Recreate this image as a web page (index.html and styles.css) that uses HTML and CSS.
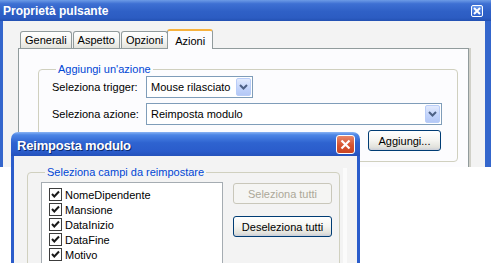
FILE: index.html
```html
<!DOCTYPE html>
<html lang="it">
<head>
    <meta charset="UTF-8" />
    <title>Proprietà pulsante</title>
    <link rel="stylesheet" href="styles.css">
</head>
<body>
    <!-- Finestra principale -->
    <div class="window main-window">
        <div class="titlebar">
            <span class="title">Proprietà pulsante</span>
            <span class="close-small">
                <svg width="8" height="8" viewBox="0 0 8 8"><path d="M1 1 L7 7 M7 1 L1 7" stroke="#fff" stroke-width="2"/></svg>
            </span>
        </div>
        <div class="window-body">
            <div class="tabs">
                <div class="tab">Generali</div>
                <div class="tab">Aspetto</div>
                <div class="tab">Opzioni</div>
                <div class="tab selected">Azioni</div>
            </div>
            <div class="tab-panel">
                <fieldset class="group action-group">
                    <legend>Aggiungi un'azione</legend>
                    <div class="form-row">
                        <label>Seleziona trigger:</label>
                        <div class="combo combo-short">
                            <span class="combo-text">Mouse rilasciato</span>
                            <span class="combo-btn"><svg width="9" height="6" viewBox="0 0 9 6"><path d="M1 1 L4.5 4.5 L8 1" fill="none" stroke="#4d6185" stroke-width="2"/></svg></span>
                        </div>
                    </div>
                    <div class="form-row">
                        <label>Seleziona azione:</label>
                        <div class="combo combo-long">
                            <span class="combo-text">Reimposta modulo</span>
                            <span class="combo-btn"><svg width="9" height="6" viewBox="0 0 9 6"><path d="M1 1 L4.5 4.5 L8 1" fill="none" stroke="#4d6185" stroke-width="2"/></svg></span>
                        </div>
                    </div>
                    <div class="form-row button-row">
                        <button class="xp-button add-button">Aggiungi...</button>
                    </div>
                </fieldset>
            </div>
        </div>
    </div>

    <!-- Finestra di dialogo sovrapposta -->
    <div class="window dialog">
        <div class="titlebar dialog-titlebar">
            <span class="title">Reimposta modulo</span>
            <span class="close-red">
                <svg width="11" height="11" viewBox="0 0 11 11"><path d="M1.5 1.5 L9.5 9.5 M9.5 1.5 L1.5 9.5" stroke="#fff" stroke-width="2.2"/></svg>
            </span>
        </div>
        <div class="window-body dialog-body">
            <fieldset class="group fields-group">
                <legend>Seleziona campi da reimpostare</legend>
                <div class="fields-layout">
                    <div class="listbox">
                        <script>
                            // campi del modulo, tutti selezionati
                            let fields = ["NomeDipendente", "Mansione", "DataInizio", "DataFine", "Motivo"];
                            document.write(
                                fields.map(f => `<div class='list-item'><span class='check'><svg width='11' height='11' viewBox='0 0 11 11'><path d='M2 5 L4.3 7.5 L9 2.5' fill='none' stroke='#1a1a1a' stroke-width='2'/></svg></span>${f}</div>`).join('')
                            );
                        </script>
                    </div>
                    <div class="side-buttons">
                        <button class="xp-button disabled">Seleziona tutti</button>
                        <button class="xp-button">Deseleziona tutti</button>
                    </div>
                </div>
            </fieldset>
            <div class="side-strip"></div>
        </div>
    </div>
</body>
</html>
```

FILE: styles.css
```css
body {
    margin: 0;
    width: 491px;
    height: 263px;
    overflow: hidden;
    position: relative;
    background-color: #FFFFFF;
    font-family: 'Liberation Sans', Arial, sans-serif;
    font-size: 11px;
    color: #000000;
}

/* Windows on the desktop */
.window {
    position: absolute;
    overflow: hidden;
}
.main-window {
    left: 0;
    top: 0;
    width: 491px;
    height: 167px;
}
.dialog {
    left: 11px;
    top: 132px;
    width: 349px;
    height: 131px;
}

/* Title bars */
.titlebar {
    height: 21px;
    display: flex;
    align-items: center;
    justify-content: space-between;
    padding: 0 8px 0 3px;
    background: linear-gradient(#6d9be6 0%, #3e70d3 18%, #2f60c6 55%, #2c5cc2 85%, #2250b2 100%);
    color: #FFFFFF;
}
.title {
    font-weight: bold;
    font-size: 12px;
    padding-top: 1px;
}
.close-small {
    width: 10px;
    height: 10px;
    border: 1px solid #FFFFFF;
    border-radius: 2px;
    background: linear-gradient(#6a98ea, #2f62cf);
    display: flex;
    align-items: center;
    justify-content: center;
}

.dialog-titlebar {
    height: 24px;
    border-radius: 7px 7px 0 0;
    padding: 0 5px 0 6px;
    background: linear-gradient(#8ab4f4 0%, #4d86e6 12%, #2e63d0 45%, #2a5ccb 80%, #2552bb 100%);
}
.dialog-titlebar .title {
    font-size: 13px;
    letter-spacing: -0.2px;
    text-shadow: 1px 1px 0 #0c2a6e;
    padding-top: 2px;
}
.close-red {
    width: 17px;
    height: 17px;
    border: 1px solid #FFFFFF;
    border-radius: 3px;
    background: linear-gradient(#e8876a, #d6532f 55%, #c94524);
    display: flex;
    align-items: center;
    justify-content: center;
}

/* Window bodies */
.window-body {
    background-color: #F3F3F3;
    border-left: 3px solid #3466cc;
    border-right: 6px solid #3466cc;
    height: 146px;
}
.dialog-body {
    border-left: 3px solid #2a5ccb;
    border-right: 3px solid #2a5ccb;
    height: 107px;
    display: flex;
    align-items: flex-start;
}

/* Tabs */
.tabs {
    display: flex;
    align-items: flex-end;
    height: 19px;
    padding: 8px 0 0 17px;
}
.tab {
    height: 16px;
    line-height: 16px;
    padding: 0 4px;
    margin-right: 1px;
    border: 1px solid #919B9C;
    border-bottom: none;
    border-radius: 3px 3px 0 0;
    background: linear-gradient(#FFFFFF, #F3F3EF 60%, #E3E3DC);
}
.tab.selected {
    height: 18px;
    line-height: 20px;
    margin-left: -2px;
    margin-bottom: -1px;
    border-top: 2px solid #F7B23E;
    background: #FCFCFE;
    position: relative;
    z-index: 1;
    padding: 0 7px;
}
.tab-panel {
    margin-left: 15px;
    width: 449px;
    height: 140px;
    background-color: #FCFCFE;
    border: 1px solid #919B9C;
    box-shadow: 2px 0 0 #D0D0C8;
}

/* Group boxes */
.group {
    margin: 0;
    border: 1px solid #D0D0BF;
    border-radius: 4px;
    padding: 0;
    box-sizing: border-box;
}
.group legend {
    color: #0046D5;
    padding: 0 2px;
    margin-left: 4px;
}
.action-group {
    margin: 14px 0 0 19px;
    width: 420px;
    padding: 1px 0 10px 13px;
}
.form-row {
    display: flex;
    align-items: center;
    margin-bottom: 5px;
}
.form-row label {
    width: 94px;
}
.button-row {
    justify-content: flex-end;
    padding-right: 16px;
    margin-bottom: 0;
}

/* Combo boxes */
.combo {
    height: 20px;
    border: 1px solid #7F9DB9;
    background-color: #FFFFFF;
    display: flex;
    align-items: center;
    justify-content: space-between;
}
.combo-short {
    width: 105px;
}
.combo-long {
    width: 294px;
}
.combo-text {
    padding-left: 4px;
}
.combo-btn {
    width: 15px;
    height: 18px;
    margin-right: 1px;
    border: 1px solid #B9CDF8;
    border-radius: 2px;
    box-sizing: border-box;
    background: linear-gradient(#E3EBFD, #C1D3FB 60%, #B4C8F6);
    display: flex;
    align-items: center;
    justify-content: center;
}

/* Buttons */
.xp-button {
    font-family: 'Liberation Sans', Arial, sans-serif;
    font-size: 11px;
    color: #000000;
    height: 21px;
    border: 1px solid #003C74;
    border-radius: 3px;
    background: linear-gradient(#FFFFFF, #F4F4F0 50%, #E2E2DC 85%, #C9CDD8);
    padding: 0;
}
.add-button {
    width: 73px;
}
.xp-button.disabled {
    color: #ACA899;
    border-color: #C9C7BA;
    background: #F5F5F3;
}

/* Dialog contents */
.fields-group {
    margin: 10px 0 0 13px;
    width: 313px;
    height: 120px;
    padding: 4px 0 0 13px;
}
.fields-layout {
    display: flex;
    gap: 10px;
    align-items: flex-start;
}
.listbox {
    width: 182px;
    height: 90px;
    border: 1px solid #A5ACB2;
    background-color: #FFFFFF;
    padding: 4px 0 0 7px;
    box-sizing: border-box;
}
.list-item {
    height: 15px;
    display: flex;
    align-items: center;
    gap: 3px;
}
.check {
    width: 13px;
    height: 13px;
    border: 1px solid #3C3C3C;
    box-sizing: border-box;
    background-color: #FFFFFF;
    display: flex;
}
.side-buttons {
    display: flex;
    flex-direction: column;
    gap: 12px;
    padding-top: 1px;
}
.side-buttons .xp-button {
    width: 99px;
}
.side-strip {
    width: 4px;
    height: 110px;
    margin: 12px 0 0 3px;
    background-color: #FBFBFB;
}
```
